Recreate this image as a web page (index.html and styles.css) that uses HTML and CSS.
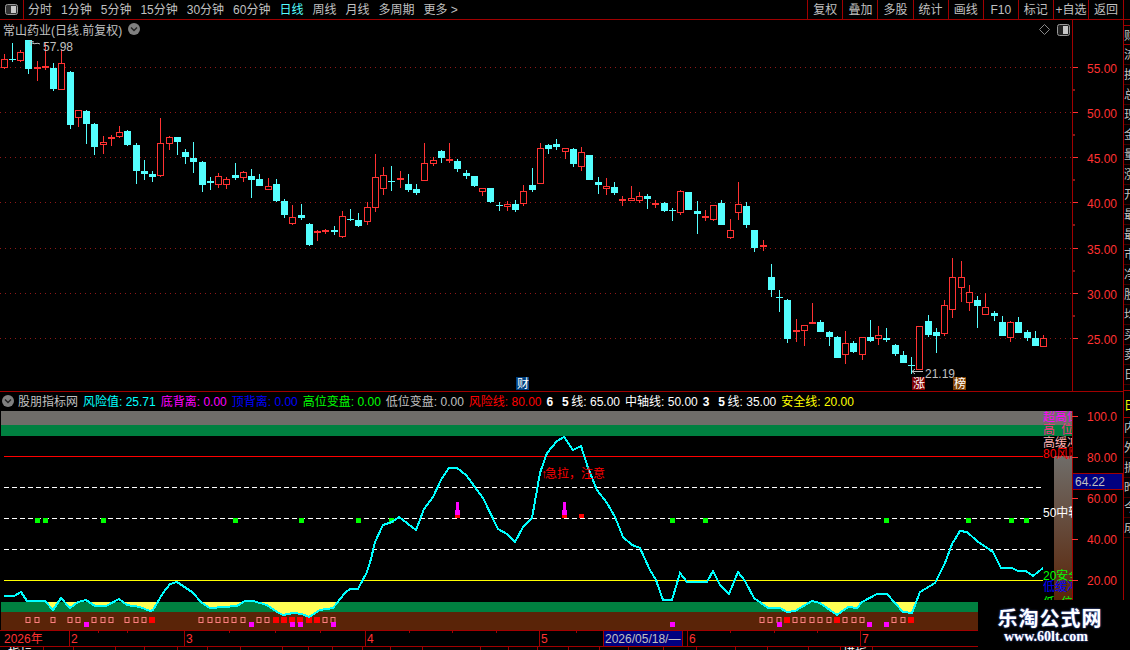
FILE: index.html
```html
<!DOCTYPE html>
<html lang="zh-CN">
<head>
    <meta charset="UTF-8">
    <title>常山药业 日线</title>
    <link rel="stylesheet" href="styles.css">
</head>
<body>
    <div class="app">
        <div class="toolbar">
            <div class="toolbar-icon">
                <svg width="13" height="11" viewBox="0 0 13 11">
                    <rect x="0.5" y="0.5" width="12" height="10" rx="2" fill="#333" stroke="#999"/>
                    <rect x="6" y="2" width="5" height="7" fill="#c8c8c8"/>
                </svg>
            </div>
            <div class="periods">
                <span>分时</span>
                <span>1分钟</span>
                <span>5分钟</span>
                <span>15分钟</span>
                <span>30分钟</span>
                <span>60分钟</span>
                <span class="active">日线</span>
                <span>周线</span>
                <span>月线</span>
                <span>多周期</span>
                <span>更多 &gt;</span>
            </div>
            <div class="actions">
                <span>复权</span>
                <span>叠加</span>
                <span>多股</span>
                <span>统计</span>
                <span>画线</span>
                <span>F10</span>
                <span>标记</span>
                <span>+自选</span>
                <span>返回</span>
            </div>
        </div>

        <div class="workspace">
            <div class="charts">
                <div class="price-pane">
                    <svg id="priceChart" class="chart" width="1123" height="371"></svg>
                    <div class="price-title">
                        常山药业(日线.前复权)
                        <svg class="round-btn" width="12" height="12" viewBox="0 0 12 12">
                            <circle cx="6" cy="6" r="6" fill="#808080"/>
                            <path d="M3 4.5 L6 7.5 L9 4.5" fill="none" stroke="#222" stroke-width="1.4"/>
                        </svg>
                    </div>
                    <div class="pane-tools">
                        <svg width="11" height="11" viewBox="0 0 11 11">
                            <path d="M5.5 0.5 L10.5 5.5 L5.5 10.5 L0.5 5.5 Z" fill="none" stroke="#888"/>
                        </svg>
                        <svg width="13" height="12" viewBox="0 0 13 12">
                            <rect x="0.5" y="0.5" width="12" height="11" rx="2" fill="#222" stroke="#999"/>
                            <rect x="6" y="2" width="5" height="8" fill="#c8c8c8"/>
                        </svg>
                    </div>
                </div>

                <div class="legend">
                    <svg class="round-btn" width="12" height="12" viewBox="0 0 12 12">
                        <circle cx="6" cy="6" r="6" fill="#808080"/>
                        <path d="M3 4.5 L6 7.5 L9 4.5" fill="none" stroke="#222" stroke-width="1.4"/>
                    </svg>
                    <span class="gray">股朋指标网</span>
                    <span class="cyan">风险值: 25.71</span>
                    <span class="magenta">底背离: 0.00</span>
                    <span class="blue">顶背离: 0.00</span>
                    <span class="lime">高位变盘: 0.00</span>
                    <span class="gray">低位变盘: 0.00</span>
                    <span class="red">风险线: 80.00</span>
                    <span class="white"><b>6 5</b>线: 65.00</span>
                    <span class="white">中轴线: 50.00</span>
                    <span class="white"><b>3 5</b>线: 35.00</span>
                    <span class="yellow">安全线: 20.00</span>
                </div>

                <svg id="riskChart" class="chart" width="1123" height="219"></svg>
                <svg id="timeAxis" class="chart" width="1123" height="20"></svg>
            </div>

            <div class="side-strip">
                <div class="side-row">财务</div>
                <div class="side-row">流通</div>
                <div class="side-row">换手</div>
                <div class="side-row">总手</div>
                <div class="side-row">现量</div>
                <div class="side-row">金额</div>
                <div class="side-row">量比</div>
                <div class="side-row">涨跌</div>
                <div class="side-row">开盘</div>
                <div class="side-row">最高</div>
                <div class="side-row">最低</div>
                <div class="side-row">市盈</div>
                <div class="side-row">净资</div>
                <div class="side-row">股本</div>
                <div class="side-row">均价</div>
                <div class="side-row">买入</div>
                <div class="side-row">卖出</div>
                <div class="side-row">日内</div>
                <div class="side-row side-gap"></div>
                <div class="side-row yellow-row">日</div>
                <div class="side-row">内盘</div>
                <div class="side-row">外盘</div>
                <div class="side-row">振幅</div>
                <div class="side-row">昨收</div>
                <div class="side-row">今开</div>
                <div class="side-row">成交</div>
            </div>
        </div>

        <div class="watermark">
            <div class="watermark-name">乐淘公式网</div>
            <div class="watermark-url">www.60lt.com</div>
        </div>
    </div>

    <script src="chart.js"></script>
</body>
</html>
```

FILE: styles.css
```css
* {
    margin: 0;
    padding: 0;
    box-sizing: border-box;
}

body {
    background-color: #000;
    font-family: "Liberation Sans", "Noto Sans CJK SC", sans-serif;
    font-size: 12px;
    color: #c0c0c0;
    overflow: hidden;
}

.app {
    position: relative;
    width: 1130px;
    height: 650px;
    overflow: hidden;
    display: flex;
    flex-direction: column;
}

/* top bar */
.toolbar {
    display: flex;
    align-items: center;
    height: 20px;
    border-bottom: 1px solid #a00000;
    line-height: 21px;
}

.toolbar-icon {
    display: flex;
    align-items: center;
    justify-content: center;
    width: 24px;
    height: 19px;
    border-right: 1px solid #a00000;
}

.periods {
    display: flex;
    gap: 9px;
    margin-left: 4px;
    height: 19px;
    white-space: nowrap;
}

.periods .active {
    color: #54ffff;
}

.actions {
    display: flex;
    margin-left: auto;
    margin-right: 6px;
}

.actions span {
    width: 35.1px;
    height: 19px;
    text-align: center;
    border-left: 1px solid #a00000;
    white-space: nowrap;
}

.actions span:last-child {
    width: 36px;
    border-right: 1px solid #a00000;
}

/* chart area */
.workspace {
    display: flex;
    flex: 1;
    min-height: 0;
}

.charts {
    width: 1123px;
    display: flex;
    flex-direction: column;
}

.chart {
    display: block;
    flex-shrink: 0;
    font-family: "Liberation Sans", "Noto Sans CJK SC", sans-serif;
    font-size: 12px;
}

.price-pane {
    position: relative;
    height: 372px;
    border-bottom: 1px solid #a00000;
}

.price-title {
    position: absolute;
    left: 3px;
    top: 0;
    display: flex;
    align-items: center;
    gap: 6px;
    height: 18px;
    white-space: nowrap;
}

.pane-tools {
    position: absolute;
    left: 1039px;
    top: 4px;
    display: flex;
    gap: 7px;
}

.round-btn {
    display: block;
    flex-shrink: 0;
}

.legend {
    display: flex;
    align-items: center;
    gap: 5px;
    height: 19px;
    padding: 0 0 2px 2px;
    white-space: nowrap;
}

.legend .round-btn {
    margin-right: -1px;
}

.legend b {
    letter-spacing: 2.7px;
}

.gray { color: #c0c0c0; }
.cyan { color: #00ffff; }
.magenta { color: #ff00ff; }
.blue { color: #0000ff; }
.lime { color: #00ff00; }
.red { color: #ff0000; }
.white { color: #fff; }
.yellow { color: #ffff00; }

.side-strip {
    width: 7px;
    padding-top: 5px;
    border-left: 1px solid #a00000;
    overflow: hidden;
}

.side-row {
    height: 20px;
    line-height: 20px;
    width: 6px;
    overflow: hidden;
    white-space: nowrap;
    border-bottom: 1px solid #400000;
}

.side-row:first-child {
    border-top: 1px solid #a00000;
    border-bottom-color: #a00000;
}

.side-gap {
    height: 6px;
    border-bottom-color: #a00000;
}

.yellow-row {
    height: 27px;
    line-height: 30px;
    color: #ffff00;
    border-bottom-color: #a00000;
}

/* logo pasted over the corner */
.watermark {
    position: absolute;
    left: 978px;
    top: 600px;
    width: 152px;
    height: 50px;
    background-color: #000;
    color: #fff;
    text-align: center;
}

.watermark-name {
    margin: 7px 0 0 -8px;
    font-family: "Noto Sans CJK SC", sans-serif;
    font-size: 20px;
    font-weight: 700;
    line-height: 22px;
    letter-spacing: 1px;
    text-shadow: 0 0 2px #6080ff;
}

.watermark-url {
    margin: 1px 0 0 -16px;
    font-family: "Liberation Serif", serif;
    font-size: 14px;
    font-weight: 700;
    line-height: 14px;
    text-shadow: 0 0 2px #6080ff;
}

/* svg bits */
.t-axis { fill: #ff3232; }
.t-gray { fill: #c0c0c0; }
.t-white { fill: #fff; }
.t-badge { fill: #fff; font-size: 12px; }
.t-date { fill: #c0c0c0; }
```

FILE: chart.js
```js
// candle rows: [kind, wickTop, bodyTop, bodyBottom, wickBottom]
// y is in thirds of a pixel, counted from each group's top
const candleGroups = [
    { top: 10, rows: [
        ['r',72,88,113,117], ['c',40,88,91,95], ['r',60,67,92,96], ['c',30,30,117,132],
        ['r',93,112,117,152], ['r',38,108,113,120], ['c',99,114,177,183], ['r',60,99,179,179],
        ['c',123,126,285,297], ['r',241,241,263,291], ['c',240,243,282,342], ['c',279,282,351,375],
        ['r',318,337,344,372], ['r',316,322,328,348], ['r',288,307,320,323], ['c',300,303,345,348],
        ['c',339,345,423,462], ['c',390,423,432,450], ['c',423,432,441,456], ['r',264,340,437,441],
        ['r',318,322,341,360], ['c',321,321,336,375], ['c',357,366,381,402], ['c',336,384,396,429],
        ['c',393,396,465,486], ['c',441,453,459,480], ['r',430,439,465,474], ['r',441,448,465,477],
        ['c',399,435,444,450], ['r',423,427,443,456], ['c',417,438,450,504], ['c',432,447,468,468],
        ['r',444,469,479,480], ['c',447,462,513,516]
    ] },
    { top: 100, rows: [
        ['c',237,243,285,294], ['r',255,292,311,315], ['c',252,285,294,300], ['c',309,312,375,378],
        ['r',330,333,339,363], ['r',327,330,336,342], ['c',318,330,336,345], ['r',273,289,350,354],
        ['c',267,297,300,303], ['c',279,300,318,321], ['r',246,262,305,315], ['r',102,172,263,276],
        ['r',141,166,206,225], ['c',138,183,186,213], ['r',153,174,177,204], ['c',162,192,210,216],
        ['c',192,207,219,225], ['r',69,130,182,182], ['r',111,121,131,138], ['c',90,93,114,129],
        ['r',69,117,120,129], ['c',117,123,147,156], ['c',150,159,168,177], ['c',168,168,198,201],
        ['r',205,205,215,228], ['c',204,204,246,249], ['c',246,255,258,273], ['r',243,253,260,273],
        ['c',240,252,270,276], ['r',195,214,251,258], ['c',144,195,210,216], ['r',69,85,191,191],
        ['c',72,75,87,102], ['c',57,72,81,90]
    ] },
    { top: 110, rows: [
        ['r',55,55,65,87], ['c',54,57,102,111], ['r',51,67,110,123], ['c',75,75,150,150],
        ['c',141,156,165,192], ['r',144,169,176,195], ['c',156,171,189,195], ['r',198,208,212,228],
        ['r',168,205,212,212], ['r',186,199,212,219], ['c',192,198,207,237], ['r',210,220,224,234],
        ['c',216,219,243,246], ['c',234,241,244,273], ['r',180,184,248,255], ['c',186,186,240,240],
        ['c',213,243,252,312], ['r',240,258,263,273], ['r',226,226,269,273], ['c',210,219,285,285],
        ['r',267,301,323,327], ['r',156,223,248,270], ['c',216,228,285,294], ['c',300,300,354,366],
        ['r',330,345,351,363]
    ] },
    { top: 230, rows: [
        ['c',42,81,120,141], ['c',120,141,144,186], ['c',147,150,267,279], ['r',207,240,245,276],
        ['r',226,226,242,288], ['r',159,216,221,221], ['c',210,216,246,246], ['c',243,246,261,288],
        ['c',258,261,324,324], ['r',243,280,314,342], ['c',273,279,306,309], ['r',262,262,314,330],
        ['c',210,261,273,276], ['r',228,256,266,285], ['c',234,264,270,276], ['c',282,285,312,318],
        ['c',303,315,339,339], ['c',321,345,348,372], ['r',229,229,359,359], ['c',195,213,255,261],
        ['c',234,246,258,309], ['r',150,166,251,258], ['r',24,82,179,204], ['r',33,82,113,156],
        ['r',105,127,158,183], ['c',138,150,168,234], ['r',129,172,194,194], ['c',183,189,198,213],
        ['c',198,216,258,258], ['r',213,217,263,276], ['c',201,216,249,249], ['c',240,247,264,273],
        ['c',243,264,288,288], ['r',255,265,290,290]
    ] }
];

// risk value line, in page pixels
const riskLine = [
    [4,596],[14,596],[21,592],[27,601],[45,601],[53,610],[61,598],[70,608],[78,602],[86,600],
    [95,606],[106,606],[119,599],[127,605],[140,607],[150,611],[153,610],[163,593],[170,584],
    [177,582],[192,592],[202,603],[210,608],[237,606],[245,601],[253,601],[267,605],[277,612],
    [283,615],[293,613],[302,614],[309,617],[320,610],[333,608],[345,593],[350,589],[358,589],
    [367,572],[371,559],[375,542],[383,525],[392,522],[399,517],[416,530],[424,509],[433,497],
    [442,478],[449,468],[457,468],[466,475],[483,498],[498,529],[507,534],[515,542],[523,527],
    [532,518],[540,473],[547,453],[557,441],[564,437],[573,450],[581,446],[588,468],[597,490],
    [607,503],[615,517],[623,537],[632,545],[640,548],[650,570],[656,580],[663,600],[672,600],
    [680,573],[687,582],[707,582],[713,571],[720,585],[729,594],[738,572],[745,581],[754,598],
    [768,608],[780,608],[787,612],[795,611],[812,601],[820,603],[837,615],[848,607],[857,608],
    [862,602],[877,594],[887,594],[903,612],[912,613],[920,592],[935,583],[945,563],[952,544],
    [960,531],[967,532],[977,541],[993,552],[1001,568],[1012,568],[1018,571],[1026,571],
    [1033,576],[1043,568]
];

const hollowMarks = [28,37,53,70,78,94,103,111,127,136,144,201,210,218,226,234,243,259,267,325,333,
    762,770,779,795,803,812,820,829,845,854,862,894,903];
const redMarks = [152,276,284,292,300,309,317,787,837,911];
const magentaMarks = [86,251,292,300,333,672,779,869,886];
const greenMarks = [37,45,103,235,301,358,391,672,705,886,968,1011,1026];

function rect(x, y, w, h, fill) {
    return `<rect x="${x}" y="${y}" width="${w}" height="${h}" fill="${fill}"/>`;
}

function hline(y, x1, x2, color, dash) {
    const d = dash ? ` stroke-dasharray="${dash}"` : '';
    return `<line x1="${x1}" y1="${y}" x2="${x2}" y2="${y}" stroke="${color}"${d}/>`;
}

function text(x, y, str, cls) {
    return `<text x="${x}" y="${y}" class="${cls}">${str}</text>`;
}

function drawCandles() {
    let out = '';
    let i = 0;
    candleGroups.forEach(group => {
        group.rows.forEach(row => {
            const col = Math.floor(4 + 8.25 * i);
            const [kind, wt, bt, bb, wb] = row.map(v => typeof v === 'number'
                ? Math.round(group.top + v / 3) : v);
            if (kind === 'c') {
                out += rect(col, wt, 1, wb - wt, '#54ffff');
                out += rect(col - 3, bt, 7, Math.max(bb - bt, 1), '#54ffff');
            } else {
                out += rect(col, wt, 1, wb - wt, '#ff3232');
                out += `<rect x="${col - 2.5}" y="${bt + 0.5}" width="6" height="${Math.max(bb - bt - 1, 1)}" fill="#000" stroke="#ff3232"/>`;
            }
            i++;
        });
    });
    return out;
}

function drawPrice() {
    let s = '';
    // page y minus the 20px toolbar
    [55, 50, 45, 40, 35, 30, 25].forEach((price, idx) => {
        const y = [47, 92, 137, 182, 228, 273, 318][idx] + 0.5;
        s += hline(y, 0, 1072, '#901818', '1 4');
        s += hline(y, 1072, 1078, '#ff3232');
        s += text(1087, y + 5, price + '.00', 't-axis');
        if (idx < 6) s += hline(y + 22.5, 1072, 1075, '#ff3232');
    });
    s += rect(1072, 0, 1, 371, '#a00000');
    s += drawCandles();

    // high / low callouts
    s += '<path d="M30 21 L31 26 M30 21 L34 22 M32 23 C35 25 37 22 40 24" fill="none" stroke="#c0c0c0"/>';
    s += text(43, 31, '57.98', 't-gray');
    s += '<path d="M912 351.5 L923 351.5 M912 351.5 L915 349 M912 351.5 L915 354" fill="none" stroke="#c0c0c0"/>';
    s += text(925, 358, '21.19', 't-gray');

    // badges on the bottom edge
    s += rect(516, 357, 13, 13, '#004080') + text(517, 368, '财', 't-badge');
    s += rect(912, 357, 13, 13, '#800000') + text(913, 368, '涨', 't-badge');
    s += rect(953, 357, 13, 13, '#804000') + text(954, 368, '榜', 't-badge');
    document.getElementById('priceChart').innerHTML = s;
}

function drawRisk() {
    const top = 411;
    let s = '<defs>'
        + '<linearGradient id="fade" x1="0" y1="0" x2="0" y2="1">'
        + '<stop offset="0" stop-color="#6f6d69"/><stop offset="1" stop-color="#5a2408"/></linearGradient>'
        + `<clipPath id="belowBand"><rect x="0" y="${602 - top}" width="1072" height="28"/></clipPath>`
        + '</defs>';

    s += rect(1, 0, 1071, 14, '#6f6d69');
    s += rect(1, 14, 1071, 11, '#008040');
    s += rect(1054, 45, 18, 145, 'url(#fade)');
    s += rect(1, 191, 1071, 10, '#008040');
    s += rect(1, 201, 1071, 18, '#5a2408');

    // level lines
    s += hline(456.5 - top, 4, 1043, '#ff0000');
    s += hline(487.5 - top, 4, 1043, '#fff', '5 3');
    s += hline(518.5 - top, 4, 1043, '#fff', '5 3');
    s += hline(549.5 - top, 4, 1043, '#fff', '5 3');
    s += hline(580.5 - top, 4, 1043, '#ffff00');

    // yellow wedge where the line drops into the band
    const pts = riskLine.map(p => `${p[0]},${p[1] - top}`).join(' ');
    s += `<polygon points="4,${602 - top} ${pts} 1043,${602 - top}" fill="#ffff54" clip-path="url(#belowBand)"/>`;

    greenMarks.forEach(x => { s += rect(x - 2, 518 - top, 5, 5, '#00ff00'); });
    hollowMarks.forEach(x => {
        s += `<rect x="${x - 2}" y="${617.5 - top}" width="4" height="5" fill="none" stroke="#ff8080"/>`;
    });
    redMarks.forEach(x => { s += rect(x - 3, 617 - top, 6, 6, '#ff0000'); });
    magentaMarks.forEach(x => { s += rect(x - 2, 622 - top, 5, 5, '#ff00ff'); });

    [457, 564].forEach(x => {
        s += rect(x - 1, 502 - top, 3, 8, '#ff00ff');
        s += rect(x - 2, 510 - top, 5, 5, '#ff00ff');
        s += rect(x - 2, 515 - top, 5, 3, '#ff0000');
    });
    s += rect(579, 514 - top, 5, 4, '#ff0000');

    s += `<polyline points="${pts}" fill="none" stroke="#00ffff" stroke-width="2" shape-rendering="crispEdges"/>`;

    const note = 478 - top;
    s += `<text x="541" y="${note}" fill="#ff0000">↑</text><text x="545" y="${note}" fill="#ff0000">急拉，注意</text>`;

    // labels next to the levels, cut off at the axis
    s += `<svg x="1043" y="0" width="29" height="189" overflow="hidden">`
        + `<text x="0" y="10" fill="#ff00ff">超高位</text>`
        + `<text x="0" y="23" fill="#ff3080">高</text><text x="18" y="23" fill="#ff3080">位</text>`
        + `<text x="0" y="36" fill="#ffb0b0">高缓冲</text>`
        + `<text x="0" y="47" fill="#ff0000">80风险</text>`
        + `<text x="0" y="106" fill="#fff">50中轴</text>`
        + `<text x="0" y="169" fill="#00ff00">20安全</text>`
        + `<text x="0" y="180" fill="#0000ff">低缓冲</text>`
        + `<text x="0" y="196" fill="#00ff00">低</text><text x="18" y="196" fill="#00ff00">位</text>`
        + `</svg>`;

    // axis
    s += rect(1072, 0, 1, 190, '#a00000');
    [['100.0', 416], ['80.00', 457], ['60.00', 498], ['40.00', 539], ['20.00', 580]].forEach(([label, y]) => {
        s += hline(y + 0.5 - top, 1072, 1078, '#ff3232');
        s += text(1087, y + 5 - top, label, 't-axis');
    });
    s += rect(1073, 473 - top, 50, 17, '#a00000');
    s += rect(1073, 474 - top, 49, 15, '#000080');
    s += text(1075, 486 - top, '64.22', 't-date');
    document.getElementById('riskChart').innerHTML = s;
}

function drawTimeAxis() {
    const line = '#a00000';
    let s = rect(0, 0, 1123, 1, line) + rect(0, 16, 1123, 1, line);

    [98, 127, 229, 275, 320, 409, 452, 496, 576, 730, 774, 817].forEach(x => {
        s += rect(x, 1, 1, 2, line);
    });
    [69, 184, 365, 539, 687, 860].forEach(x => {
        s += rect(x, 1, 1, 15, line);
    });
    [43, 73, 115, 144, 177, 207, 240, 282, 308, 332, 362, 390, 422, 480, 508, 537, 568, 599, 628,
        663, 696, 735, 767, 808, 840, 872].forEach(x => {
        s += rect(x, 17, 1, 3, line);
    });

    s += text(4, 13, '2026年', 't-axis');
    [['2', 71], ['3', 186], ['4', 367], ['5', 541], ['6', 689], ['7', 862]].forEach(([m, x]) => {
        s += text(x, 13, m, 't-axis');
    });

    s += rect(603, 1, 80, 15, '#000080');
    s += rect(603, 1, 1, 15, line) + rect(682, 1, 1, 15, line);
    s += text(605, 13, '2026/05/18/—', 't-date');

    // next row is cut off by the window edge
    s += text(8, 28, '指标', 't-white');
    s += text(843, 28, '模板', 't-white');
    document.getElementById('timeAxis').innerHTML = s;
}

drawPrice();
drawRisk();
drawTimeAxis();
```
